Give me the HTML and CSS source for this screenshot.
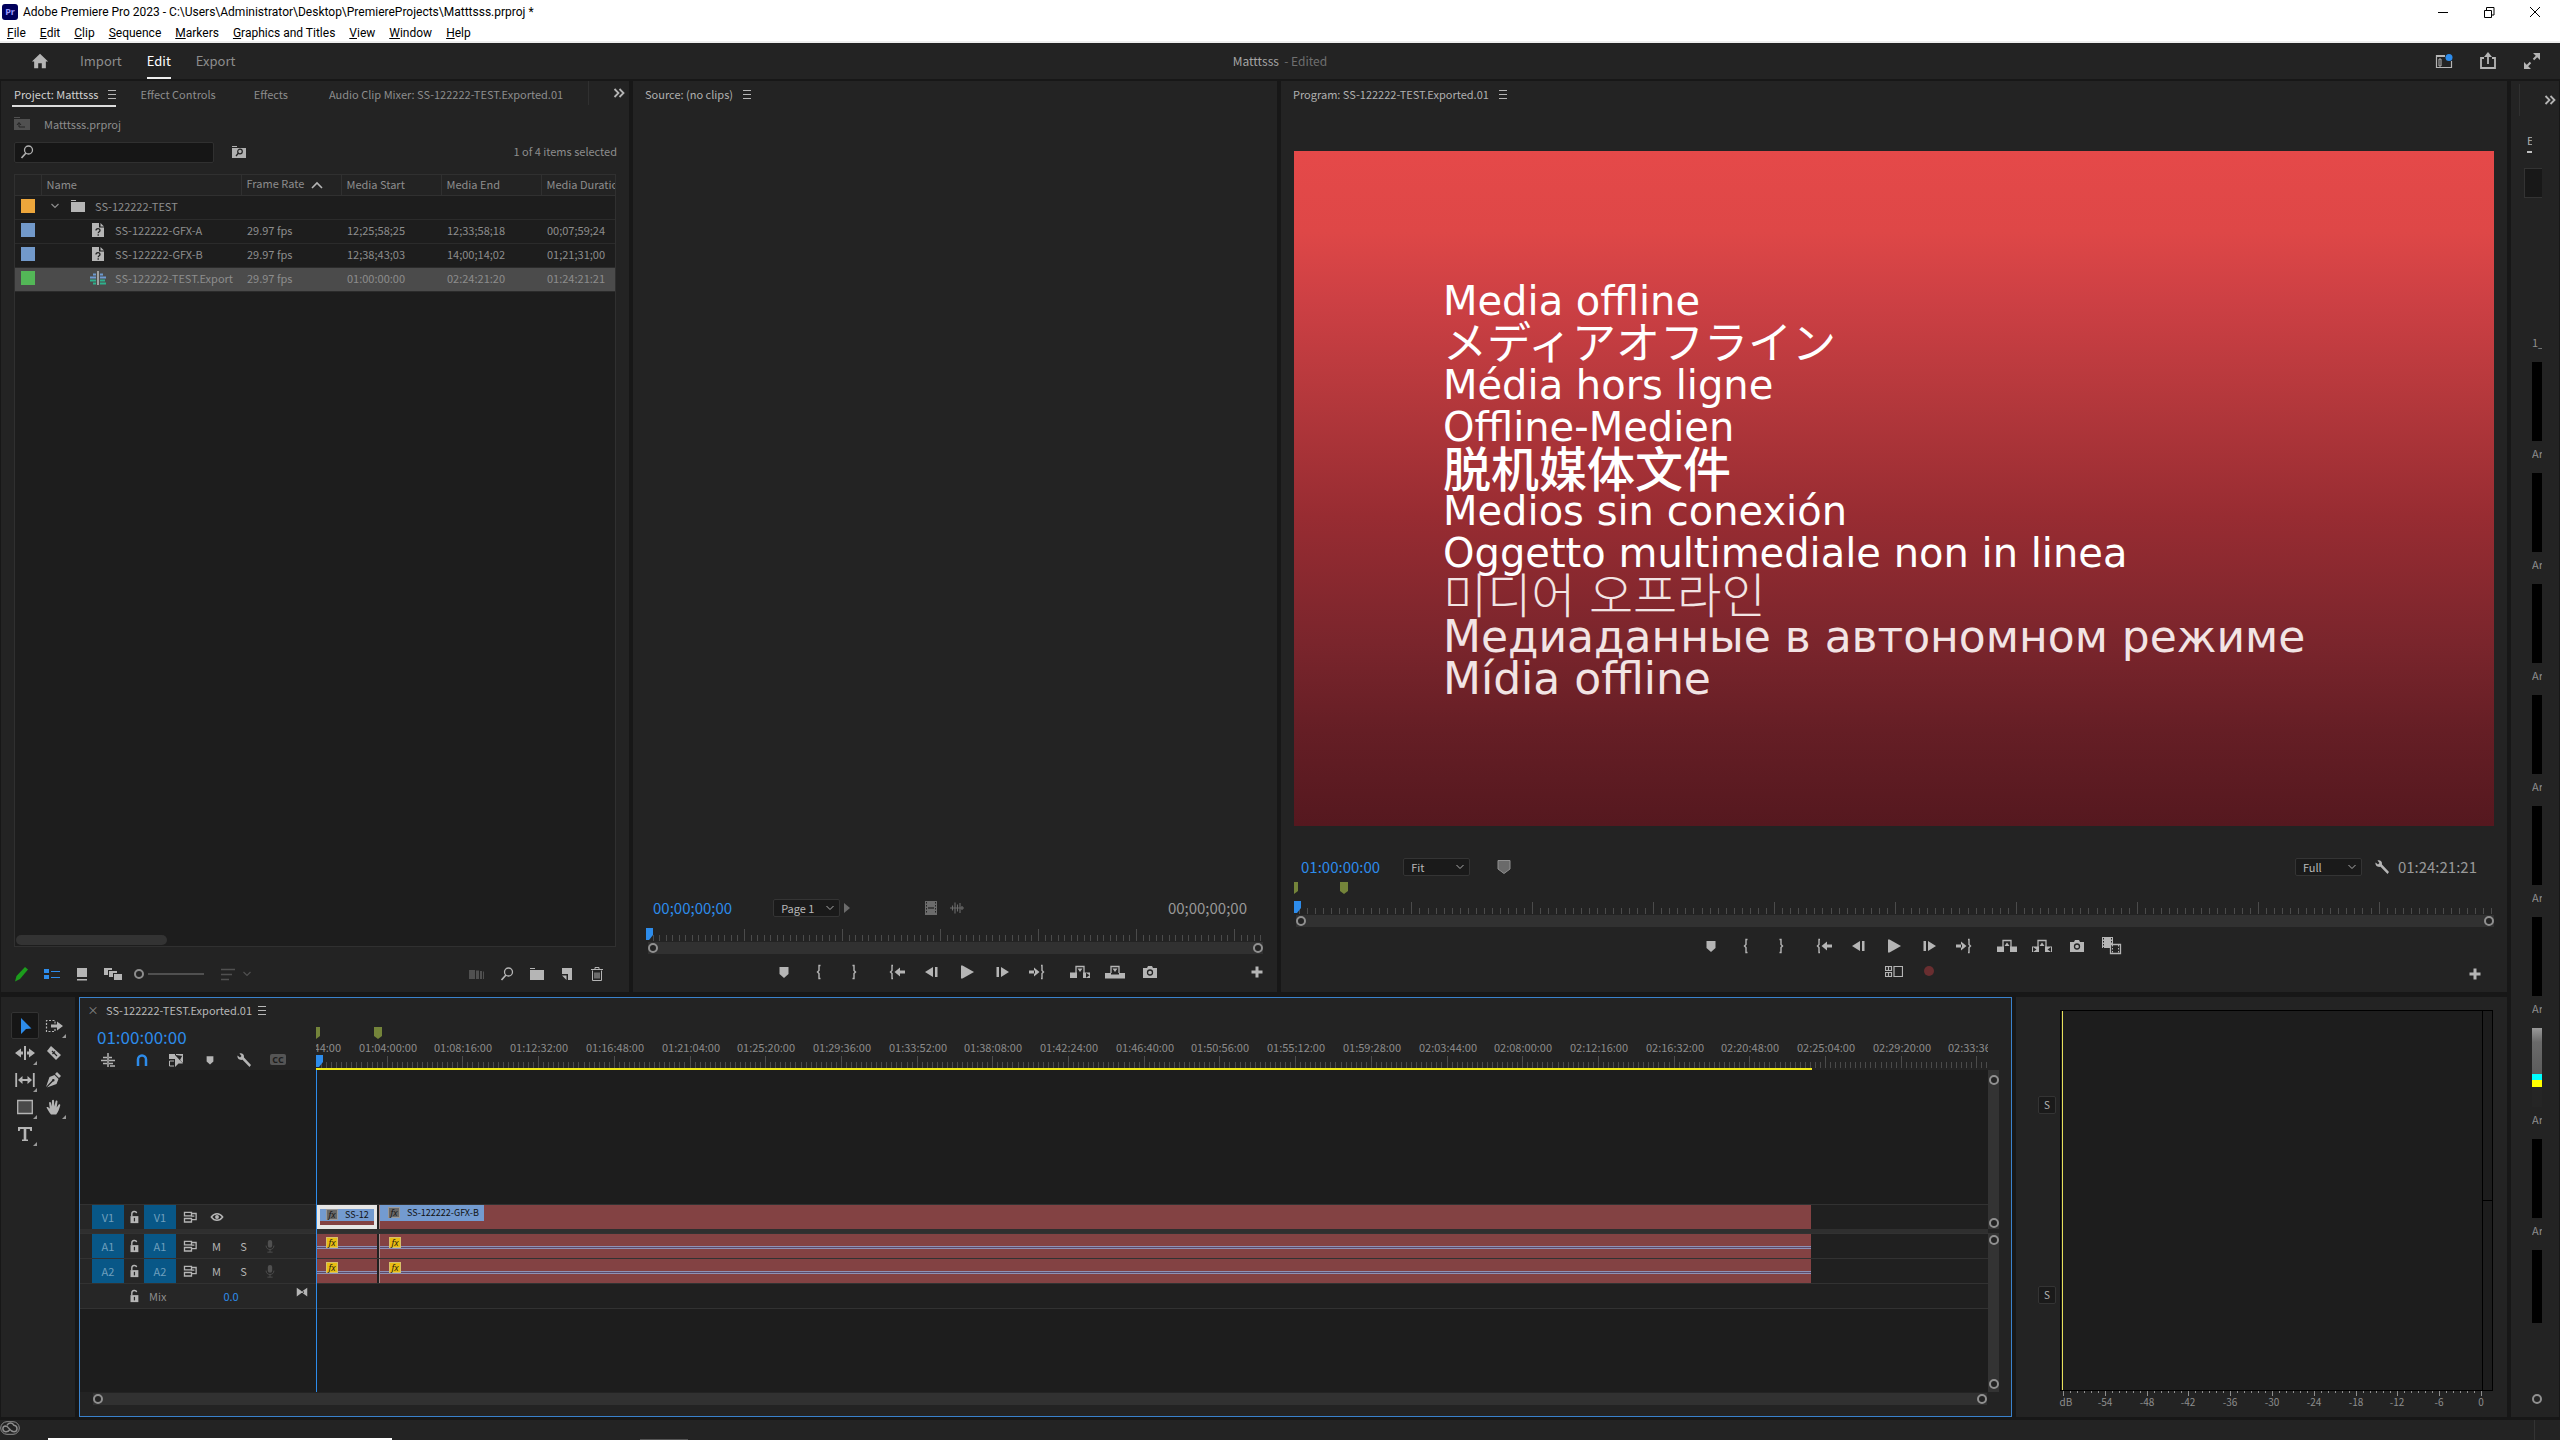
FILE: index.html
```html
<!DOCTYPE html>
<html lang="en">
<head>
<meta charset="utf-8">
<title>Adobe Premiere Pro 2023</title>
<link rel="stylesheet" href="styles.css">
</head>
<body>
<svg class="sprite" aria-hidden="true">
  <symbol id="menu" viewBox="0 0 16 16"><path d="M4 4.500h8M4 8.500h8M4 12.500h8" stroke="currentColor" fill="none"/></symbol>
  <symbol id="more" viewBox="0 0 16 16"><path d="M3.500 4l4 4-4 4M8.500 4l4 4-4 4" stroke="currentColor" stroke-width="1.800" fill="none"/></symbol>
  <symbol id="chev" viewBox="0 0 16 16"><path d="M4.500 6l3.500 3.500L11.500 6" stroke="currentColor" stroke-width="1.200" fill="none"/></symbol>
  <symbol id="sort-up" viewBox="0 0 16 16"><path d="M3 11l5-5 5 5" stroke="currentColor" stroke-width="1.600" fill="none"/></symbol>
  <symbol id="home" viewBox="0 0 20 20"><path d="M10 2L1 10.500h2.500V18h4.500v-5.500h4V18h4.500v-7.500H19z" fill="currentColor"/></symbol>
  <symbol id="workspace" viewBox="0 0 18 16"><path d="M10 2.500H1.500v12h15V8" stroke="currentColor" stroke-width="1.200" fill="none"/><path d="M1 2h9v2H1z" fill="currentColor"/><path d="M4 6v7h2V6z" stroke="currentColor" fill="none"/><circle cx="14" cy="4.500" r="3.500" fill="#2d8ceb"/></symbol>
  <symbol id="share" viewBox="0 0 18 18"><path d="M5 6H2v10h14V6h-3M9 12V3" stroke="currentColor" stroke-width="1.800" fill="none"/><path d="M9 0l4 5H5z" fill="currentColor"/></symbol>
  <symbol id="expand" viewBox="0 0 18 18"><path d="M10.500 7.500L14 4M7.500 10.500L4 14" stroke="currentColor" stroke-width="2" fill="none"/><path d="M10 1h7v7zM1 10v7h7z" fill="currentColor"/></symbol>
  <symbol id="folder-up" viewBox="0 0 16 16"><path d="M0 1h6v1H0zM0 3h16v11H0z" fill="currentColor"/><path d="M5 7v4h6M3 9l2-2.500L7 9" stroke="#232323" fill="none"/></symbol>
  <symbol id="search" viewBox="0 0 16 16"><circle cx="9.500" cy="6" r="4" stroke="currentColor" stroke-width="1.300" fill="none"/><path d="M7 9l-4.500 5" stroke="currentColor" stroke-width="1.700"/></symbol>
  <symbol id="folder-search" viewBox="0 0 16 16"><path d="M1 2h5v1H1zM1 4h14v10H1z" fill="currentColor"/><circle cx="9" cy="7.500" r="2.300" stroke="#232323" stroke-width="1.200" fill="none"/><path d="M7.500 9L5 12" stroke="#232323" stroke-width="1.300"/></symbol>
  <symbol id="folder" viewBox="0 0 16 16"><path d="M1 2h5v1H1zM1 4h14v10H1z" fill="currentColor"/></symbol>
  <symbol id="offline" viewBox="0 0 16 16"><path d="M2 1h7v4.500h5V15H2z" fill="currentColor"/><path d="M10.500 1v3.500H14z" fill="currentColor"/><path d="M6 8.500c0-2.500 4-2.300 4 0 0 1.300-1.800 1.200-1.800 2.700M8.200 12.200v1.500" stroke="#232323" stroke-width="1.300" fill="none"/></symbol>
  <symbol id="sequence" viewBox="0 0 16 16"><path d="M3 4.500h3M0 7.500h6M10 4.500h3M10 7.500h6" stroke="#6e9ad0" stroke-width="1.800"/><path d="M0 10.500h6M3 13.500h3M10 10.500h5M10 13.500h6" stroke="#2fb08c" stroke-width="1.800"/><path d="M8 1v14" stroke="#ddd" stroke-width="1.200"/></symbol>
  <symbol id="pencil" viewBox="0 0 16 16"><path d="M11 1l3 2.500L6 13l-5 2.500L2.500 10z" fill="#1c9c1c"/></symbol>
  <symbol id="list" viewBox="0 0 16 16"><path d="M0 3h5v4H0zM0 9h5v4H0z" fill="currentColor"/><path d="M7 5.500h9M7 11.500h9" stroke="currentColor" stroke-width="1.200"/></symbol>
  <symbol id="iconview" viewBox="0 0 16 16"><path d="M3 2h10v9H3zM3 13h10v1.500H3z" fill="currentColor"/></symbol>
  <symbol id="freeform" viewBox="0 0 18 16"><path d="M0 2h8v2H4v5H0zM5 5h8v2H9v4H5zM10 8h8v6h-8z" fill="currentColor"/></symbol>
  <symbol id="sort" viewBox="0 0 16 16"><path d="M1 3.500h14M1 8.500h11M1 13.500h8" stroke="currentColor" stroke-width="1.500"/></symbol>
  <symbol id="automate" viewBox="0 0 16 16"><path d="M0 4h6v9H0zM7 4.500h3V13H7zM11 5h2v8h-2zM14 5.500h1V13h-1z" fill="currentColor"/></symbol>
  <symbol id="newitem" viewBox="0 0 16 16"><path d="M3 2h10v12H9V8H3z" fill="currentColor"/><path d="M3 9.500h4.500V14z" fill="currentColor"/></symbol>
  <symbol id="trash" viewBox="0 0 16 16"><path d="M3.500 4.500v10h9v-10M2 3.500h12M6 3V1.500h4V3M6 6.500v6M8 6.500v6M10 6.500v6" stroke="currentColor" fill="none"/></symbol>
  <symbol id="marker" viewBox="0 0 16 16"><path d="M3.500 3h9v7L8 14l-4.500-4z" fill="currentColor"/></symbol>
  <symbol id="in" viewBox="0 0 16 16"><path d="M9.500 1.500H8v5L6.500 8 8 9.500v5h1.500" stroke="currentColor" stroke-width="1.400" fill="none"/></symbol>
  <symbol id="out" viewBox="0 0 16 16"><path d="M6.500 1.500H8v5L9.500 8 8 9.500v5H6.500" stroke="currentColor" stroke-width="1.400" fill="none"/></symbol>
  <symbol id="goin" viewBox="0 0 16 16"><path d="M4 1.500H3v5L1.500 8 3 9.500v5h1" stroke="currentColor" stroke-width="1.400" fill="none"/><path d="M5.500 8L11 3.500v9z" fill="currentColor"/><path d="M10 6.500h6v3h-6z" fill="currentColor"/></symbol>
  <symbol id="goout" viewBox="0 0 16 16"><path d="M12 1.500h1v5L14.500 8 13 9.500v5h-1" stroke="currentColor" stroke-width="1.400" fill="none"/><path d="M10.500 8L5 3.500v9zM0 6.500h6v3H0z" fill="currentColor"/></symbol>
  <symbol id="back" viewBox="0 0 16 16"><path d="M1 8l8-5v10zM11 3h2.500v10H11z" fill="currentColor"/></symbol>
  <symbol id="fwd" viewBox="0 0 16 16"><path d="M15 8L7 3v10zM2.500 3H5v10H2.500z" fill="currentColor"/></symbol>
  <symbol id="play" viewBox="0 0 16 16"><path d="M2 1.500h1.500L15 8 3.500 14.500H2z" fill="currentColor"/></symbol>
  <symbol id="insert" viewBox="0 0 20 16"><path d="M6 9V2.500h8V9" stroke="currentColor" stroke-width="1.300" fill="none"/><path d="M0 8.500h7V14H0zM13 8.500h7V14h-7zM7.500 4.500h5L10 8z" fill="currentColor"/><path d="M16 8.800l3.500 2.500-3.500 2.500z" fill="#232323"/></symbol>
  <symbol id="overwrite" viewBox="0 0 20 16"><path d="M6 9V2.500h8V9" stroke="currentColor" stroke-width="1.300" fill="none"/><path d="M7.500 4.500h5L10 8zM0 9h6v1.500h8V9h6v5.500H0z" fill="currentColor"/></symbol>
  <symbol id="lift" viewBox="0 0 20 16"><path d="M6 9V2.500h8V9" stroke="currentColor" stroke-width="1.300" fill="none"/><path d="M7.500 8L10 4.500 12.500 8zM0 8.500h7V14H0zM13 8.500h7V14h-7z" fill="currentColor"/></symbol>
  <symbol id="extract" viewBox="0 0 20 16"><path d="M6 9V2.500h8V9" stroke="currentColor" stroke-width="1.300" fill="none"/><path d="M7.500 8L10 4.500 12.500 8zM0 8.500h7V14H0zM13 8.500h7V14h-7z" fill="currentColor"/><path d="M1 9l3.500 2.500L1 14zM19 9l-3.500 2.500L19 14z" fill="#232323"/></symbol>
  <symbol id="camera" viewBox="0 0 16 16"><path d="M1 4h4l1-2h4l1 2h4v10H1z" fill="currentColor"/><circle cx="8" cy="8.500" r="2.500" stroke="#232323" stroke-width="1.300" fill="none"/></symbol>
  <symbol id="compare" viewBox="0 0 20 18"><path d="M0 0h11v11H0z" fill="currentColor"/><path d="M1.500 1v10M9.500 1v7" stroke="#232323" stroke-dasharray="1.500 1.500"/><path d="M8.500 7.500h10v9h-10z" fill="#232323" stroke="currentColor" stroke-width="1.300"/><path d="M10.500 8v9M16.500 8v9" stroke="currentColor" stroke-dasharray="1.500 1.500"/></symbol>
  <symbol id="multicam" viewBox="0 0 18 16"><path d="M.5 3.500h6v4h-6zM.5 9.500h6v4h-6zM3.500 3.500v4M3.500 9.500v4M9 3.500h8.500v10H9z" stroke="currentColor" stroke-width="1.200" fill="none"/></symbol>
  <symbol id="plus" viewBox="0 0 16 16"><path d="M6.500 2.500h3v4h4v3h-4v4h-3v-4h-4v-3h4z" fill="currentColor"/></symbol>
  <symbol id="film" viewBox="0 0 16 16"><path d="M2 1h12v14H2z" fill="currentColor"/><path d="M3.500 2v12M12.500 2v12" stroke="#232323" stroke-dasharray="1.500 1.500"/><path d="M5 8h6" stroke="#232323" stroke-width="1.300"/></symbol>
  <symbol id="wave" viewBox="0 0 16 16"><path d="M1 8h14M3.500 5.500v5M6 2.500v11M8.500 4.500v7M11 3v10M13 6v4" stroke="currentColor" stroke-width="1.100"/></symbol>
  <symbol id="tri" viewBox="0 0 16 16"><path d="M4 3l6 5-6 5z" fill="currentColor"/></symbol>
  <symbol id="shield" viewBox="0 0 16 16"><path d="M2 1.500h12v8.500l-6 4.500L2 10z" fill="#6a6a6a" stroke="currentColor"/></symbol>
  <symbol id="wrench" viewBox="0 0 16 16"><path d="M3.500 1.500c2-.8 5 .5 4.500 4l7 7.500-1.500 2L6.500 7.800C3.500 8.500 1 6.500 1.500 3.500L4 5.500 5.500 4z" fill="currentColor"/></symbol>
  <symbol id="nest" viewBox="0 0 16 16"><path d="M8 1v14M1 8.500h6M3 5.500h4M3 11.500h4M9 5.500h3M9 8.500h6M9 11.500h4M10 14h5" stroke="currentColor" stroke-width="1.500"/></symbol>
  <symbol id="magnet" viewBox="0 0 16 16"><path d="M4 14V7.500a4 4 0 0 1 8 0V14" stroke="currentColor" stroke-width="2.500" fill="none"/></symbol>
  <symbol id="linked" viewBox="0 0 16 16"><path d="M1 2h6v5H1zM8 2h7v2L8 3zM15 2v9l-3-3z" fill="currentColor"/><path d="M6 9H1.500v5H6" stroke="currentColor" fill="none"/><path d="M7 3l8 8.500h-4.500L7 15z" fill="currentColor"/></symbol>
  <symbol id="arrow" viewBox="0 0 16 16"><path d="M4 0l10.500 10.500L9 11l-5 5z" fill="currentColor"/></symbol>
  <symbol id="track" viewBox="0 0 18 16"><path d="M10 5.500v-3H1.500v11H10v-3" stroke="currentColor" stroke-width="1.200" stroke-dasharray="2 1.500" fill="none"/><path d="M6 6.500h6v-3L18 8l-6 4.500v-3H6z" fill="currentColor"/></symbol>
  <symbol id="ripple" viewBox="0 0 20 16"><path d="M9 1h2v14H9z" fill="currentColor"/><path d="M0 8l6-4.500v3h2v3H6v3zM20 8l-6-4.500v3h-2v3h2v3z" fill="currentColor"/></symbol>
  <symbol id="razor" viewBox="0 0 16 16"><path d="M5 1l10 9-5 5L1 6z" fill="currentColor"/><path d="M6 6l5 5M9 6.500L6.500 9" stroke="#232323" stroke-width="1.200"/></symbol>
  <symbol id="slip" viewBox="0 0 20 16"><path d="M1.200 1v14M18.800 1v14M5 8h10" stroke="currentColor" stroke-width="1.800"/><path d="M3 8l4.500-4v8zM17 8l-4.500-4v8z" fill="currentColor"/></symbol>
  <symbol id="pen" viewBox="0 0 16 16"><path d="M11 0l4 4-2 2-4-4zM8.500 3l4 4-2 5L1 15.500 7 9.500a1.300 1.300 0 1 0-1-1L0 15 3.500 5z" fill="currentColor"/></symbol>
  <symbol id="rect" viewBox="0 0 16 16"><path d="M.7 1.500h14.600v13H.7z" fill="#4a4a4a" stroke="currentColor" stroke-width="1.300"/></symbol>
  <symbol id="hand" viewBox="0 0 16 16"><path d="M5 15.500C3 13 1.500 10.500.5 8.500c.8-1 2-.3 3.300 1.300L3 3.500c.8-1 1.800-.7 2 .5l.8 3.500.2-6c.7-1 1.700-1 2 0l.3 6 1.400-5.500c.8-.8 1.700-.5 1.800.5l-.8 6 2-3c.8-.7 1.800 0 1.500 1-1 3.500-2 6.500-4 9z" fill="currentColor"/></symbol>
  <symbol id="type" viewBox="0 0 16 16"><path d="M1 1h14v4h-1.700l-.6-2H9.300v10.500H11V15H5v-1.500h1.700V3H3.300l-.6 2H1z" fill="currentColor"/></symbol>
  <symbol id="lock" viewBox="0 0 16 16"><path d="M4 7h9v8H4z" fill="currentColor"/><path d="M5.500 7V4.500c0-3.500 5-3.500 5.500-1" stroke="currentColor" stroke-width="1.600" fill="none"/><path d="M8.500 9v4" stroke="#272727" stroke-width="1.400"/></symbol>
  <symbol id="sync" viewBox="0 0 16 16"><path d="M1.700 2.700h8v4h-8zM1.700 9.700h8v4h-8zM10 4h5v7h-5M9 7h4" stroke="currentColor" stroke-width="1.500" fill="none"/></symbol>
  <symbol id="eye" viewBox="0 0 16 16"><path d="M1.500 8c3.500-5 9.500-5 13 0-3.500 5-9.500 5-13 0z" stroke="currentColor" stroke-width="1.600" fill="none"/><circle cx="8" cy="8" r="2.200" fill="currentColor"/></symbol>
  <symbol id="mic" viewBox="0 0 16 16"><rect x="5.500" y="1" width="5" height="9" rx="2.500" fill="currentColor"/><path d="M3.500 7.500c0 6 9 6 9 0M8 12v3M5 15h6" stroke="currentColor" fill="none"/></symbol>
  <symbol id="bowtie" viewBox="0 0 16 16"><path d="M2 3l5 3.500v3L2 13zM14 3L9 6.500v3l5 3.500zM6 7h4v2H6z" fill="currentColor"/></symbol>
  <symbol id="cloud" viewBox="0 0 20 16"><rect x=".7" y="1.700" width="18.600" height="12.600" rx="6.300" stroke="currentColor" fill="none"/><path d="M10 9.500c-1.500 2-3 2.500-4.500 2.300-3.500-.5-3.500-5.500 0-5.800 3.500 0 4 5.800 8.500 5.800 4-.3 4-6 0-6.500-1.500-3-5.500-3-7 0" stroke="currentColor" stroke-width="1.500" fill="none"/></symbol>
  <symbol id="playhead" viewBox="0 0 7 12"><path d="M0 0h7v7l-4 5H0z" fill="#2d8ceb"/></symbol>
  <symbol id="flag" viewBox="0 0 8 12"><path d="M0 0h8v9l-4 3-4-3z" fill="#74843a"/></symbol>
  <symbol id="flag-half" viewBox="0 0 4 12"><path d="M0 0h4v9l-4 3z" fill="#74843a"/></symbol>
</svg>

<header class="titlebar">
  <span class="app-badge">Pr</span>
  <span class="doc-title">Adobe Premiere Pro 2023 - C:\Users\Administrator\Desktop\PremiereProjects\Matttsss.prproj *</span>
  <div class="window-buttons">
    <button aria-label="Minimize"><svg width="10" height="10"><path d="M0 5.500h10" stroke="#000"/></svg></button>
    <button aria-label="Restore"><svg width="11" height="11"><path d="M.5 3.500h7v7h-7zM2.500 3V.5h7.500v7.500H8" stroke="#000" fill="none"/></svg></button>
    <button aria-label="Close"><svg width="10" height="10"><path d="M0 0l10 10M10 0L0 10" stroke="#000"/></svg></button>
  </div>
</header>
<nav class="menubar">
  <button><u>F</u>ile</button><button><u>E</u>dit</button><button><u>C</u>lip</button><button><u>S</u>equence</button><button><u>M</u>arkers</button><button><u>G</u>raphics and Titles</button><button><u>V</u>iew</button><button><u>W</u>indow</button><button><u>H</u>elp</button>
</nav>
<div class="modebar">
  <div class="modes">
    <button class="home" aria-label="Home"><svg width="20" height="18"><use href="#home"/></svg></button>
    <button>Import</button><button class="active">Edit</button><button>Export</button>
  </div>
  <div class="doc-state">Matttsss&nbsp; <span>- Edited</span></div>
  <div class="mode-actions">
    <button aria-label="Workspaces"><svg width="18" height="16"><use href="#workspace"/></svg></button>
    <button aria-label="Quick export"><svg width="18" height="18"><use href="#share"/></svg></button>
    <button aria-label="Full screen"><svg width="18" height="18"><use href="#expand"/></svg></button>
  </div>
</div>

<main class="workspace">
  <div class="rows">
    <div class="top-row">
      <section class="panel project">
        <div class="tabs">
          <button class="tab active">Project: Matttsss<svg class="i"><use href="#menu"/></svg></button>
          <button class="tab t2">Effect Controls</button>
          <button class="tab t3">Effects</button>
          <button class="tab t4">Audio Clip Mixer: SS-122222-TEST.Exported.01</button>
          <button class="overflow" aria-label="More panels"><svg class="i"><use href="#more"/></svg></button>
        </div>
        <div class="crumb"><svg class="i"><use href="#folder-up"/></svg>Matttsss.prproj</div>
        <div class="search-row">
          <label class="search"><svg class="i"><use href="#search"/></svg><input type="text" aria-label="Search project"></label>
          <button aria-label="New search bin"><svg class="i"><use href="#folder-search"/></svg></button>
          <span class="count">1 of 4 items selected</span>
        </div>
        <div class="bin">
          <table>
            <colgroup><col class="c-label"><col class="c-name"><col class="c-data"><col class="c-data"><col class="c-data"><col></colgroup>
            <thead><tr><th></th><th>Name</th><th>Frame Rate<svg class="i up"><use href="#sort-up"/></svg></th><th>Media Start</th><th>Media End</th><th>Media Duration</th></tr></thead>
            <tbody>
              <tr><td><i class="chip orange"></i></td><td colspan="5"><div class="cell bin-name"><svg class="i dim"><use href="#chev"/></svg><svg class="i"><use href="#folder"/></svg>SS-122222-TEST</div></td></tr>
              <tr><td><i class="chip blue"></i></td><td><div class="cell item"><svg class="i"><use href="#offline"/></svg>SS-122222-GFX-A</div></td><td>29.97 fps</td><td>12;25;58;25</td><td>12;33;58;18</td><td>00;07;59;24</td></tr>
              <tr><td><i class="chip blue"></i></td><td><div class="cell item"><svg class="i"><use href="#offline"/></svg>SS-122222-GFX-B</div></td><td>29.97 fps</td><td>12;38;43;03</td><td>14;00;14;02</td><td>01;21;31;00</td></tr>
              <tr class="selected"><td><i class="chip green"></i></td><td><div class="cell item"><svg class="i"><use href="#sequence"/></svg>SS-122222-TEST.Export</div></td><td>29.97 fps</td><td>01:00:00:00</td><td>02:24:21:20</td><td>01:24:21:21</td></tr>
            </tbody>
          </table>
          <div class="hscroll"></div>
        </div>
        <div class="bin-tools">
          <button aria-label="Writable"><svg class="i"><use href="#pencil"/></svg></button>
          <button class="on" aria-label="List view"><svg class="i"><use href="#list"/></svg></button>
          <button aria-label="Icon view"><svg class="i"><use href="#iconview"/></svg></button>
          <button aria-label="Freeform view"><svg width="18" height="16"><use href="#freeform"/></svg></button>
          <input class="zoom" type="range" min="0" max="100" value="0" aria-label="Thumbnail size">
          <button class="off" aria-label="Sort"><svg class="i"><use href="#sort"/></svg><svg class="i"><use href="#chev"/></svg></button>
          <span class="grow"></span>
          <button class="off" aria-label="Automate to sequence"><svg class="i"><use href="#automate"/></svg></button>
          <button aria-label="Find"><svg class="i"><use href="#search"/></svg></button>
          <button aria-label="New bin"><svg class="i"><use href="#folder"/></svg></button>
          <button aria-label="New item"><svg class="i"><use href="#newitem"/></svg></button>
          <button aria-label="Delete"><svg class="i"><use href="#trash"/></svg></button>
        </div>
      </section>

      <section class="panel monitor source">
        <div class="tabs"><button class="tab plain">Source: (no clips)<svg class="i"><use href="#menu"/></svg></button></div>
        <div class="stage"></div>
        <div class="readout">
          <span class="tc blue-text">00;00;00;00</span>
          <select aria-label="Page"><option>Page 1</option></select><svg class="i faint"><use href="#tri"/></svg>
          <span class="drag-icons"><svg class="i"><use href="#film"/></svg><svg class="i"><use href="#wave"/></svg></span>
          <span class="tc end">00;00;00;00</span>
        </div>
        <div class="flags"></div>
        <div class="ruler" data-scale="618" data-start="0" data-step="98"><svg class="head" width="7" height="12"><use href="#playhead"/></svg></div>
        <div class="range"><i></i><i></i></div>
        <div class="transport">
          <div class="keys">
            <button aria-label="Add marker"><svg class="i"><use href="#marker"/></svg></button><button aria-label="Mark in"><svg class="i"><use href="#in"/></svg></button><button aria-label="Mark out"><svg class="i"><use href="#out"/></svg></button>
            <button class="gap" aria-label="Go to in"><svg class="i"><use href="#goin"/></svg></button><button aria-label="Step back"><svg class="i"><use href="#back"/></svg></button><button aria-label="Play"><svg class="i"><use href="#play"/></svg></button><button aria-label="Step forward"><svg class="i"><use href="#fwd"/></svg></button><button aria-label="Go to out"><svg class="i"><use href="#goout"/></svg></button>
            <button class="gap" aria-label="Insert"><svg width="20" height="16"><use href="#insert"/></svg></button><button aria-label="Overwrite"><svg width="20" height="16"><use href="#overwrite"/></svg></button><button aria-label="Export frame"><svg class="i"><use href="#camera"/></svg></button>
          </div>
          <button class="add" aria-label="Button editor"><svg class="i"><use href="#plus"/></svg></button>
        </div>
      </section>

      <section class="panel monitor program">
        <div class="tabs"><button class="tab plain">Program: SS-122222-TEST.Exported.01<svg class="i"><use href="#menu"/></svg></button></div>
        <div class="video">
          <p>Media offline</p><p class="cjk" lang="ja">メディアオフライン</p><p>Média hors ligne</p><p>Offline-Medien</p><p class="cjk zh" lang="zh">脱机媒体文件</p><p>Medios sin conexión</p><p>Oggetto multimediale non in linea</p><p class="cjk ko" lang="ko">미디어 오프라인</p><p class="ru" lang="ru">Медиаданные в автономном режиме</p><p class="ru">Mídia offline</p>
        </div>
        <div class="readout">
          <span class="tc blue-text">01:00:00:00</span>
          <select aria-label="Zoom level"><option>Fit</option></select>
          <svg class="i shield"><use href="#shield"/></svg>
          <span class="grow"></span>
          <select aria-label="Playback resolution"><option>Full</option></select>
          <button class="settings" aria-label="Settings"><svg class="i"><use href="#wrench"/></svg></button>
          <span class="tc">01:24:21:21</span>
        </div>
        <div class="flags"><svg width="4" height="12"><use href="#flag-half"/></svg><svg class="second" width="8" height="12"><use href="#flag"/></svg></div>
        <div class="ruler" data-scale="1199" data-start="-3.500" data-step="120.800"><svg class="head" width="7" height="12"><use href="#playhead"/></svg></div>
        <div class="range"><i></i><i></i></div>
        <div class="transport">
          <div class="keys">
            <button aria-label="Add marker"><svg class="i"><use href="#marker"/></svg></button><button aria-label="Mark in"><svg class="i"><use href="#in"/></svg></button><button aria-label="Mark out"><svg class="i"><use href="#out"/></svg></button>
            <button class="gap" aria-label="Go to in"><svg class="i"><use href="#goin"/></svg></button><button aria-label="Step back"><svg class="i"><use href="#back"/></svg></button><button aria-label="Play"><svg class="i"><use href="#play"/></svg></button><button aria-label="Step forward"><svg class="i"><use href="#fwd"/></svg></button><button aria-label="Go to out"><svg class="i"><use href="#goout"/></svg></button>
            <button class="gap" aria-label="Lift"><svg width="20" height="16"><use href="#lift"/></svg></button><button aria-label="Extract"><svg width="20" height="16"><use href="#extract"/></svg></button><button aria-label="Export frame"><svg class="i"><use href="#camera"/></svg></button><button aria-label="Comparison view"><svg width="20" height="18"><use href="#compare"/></svg></button>
          </div>
        </div>
        <div class="transport">
          <div class="keys"><button aria-label="Multi-camera"><svg width="18" height="16"><use href="#multicam"/></svg></button><button aria-label="Record"><i class="rec"></i></button></div>
          <button class="add" aria-label="Button editor"><svg class="i"><use href="#plus"/></svg></button>
        </div>
      </section>
    </div>

    <div class="bottom-row">
      <section class="panel tools">
        <button class="active" aria-label="Selection"><svg class="i"><use href="#arrow"/></svg></button>
        <button class="sub" aria-label="Track select"><svg width="18" height="16"><use href="#track"/></svg></button>
        <button class="sub" aria-label="Ripple edit"><svg width="20" height="16"><use href="#ripple"/></svg></button>
        <button aria-label="Razor"><svg class="i"><use href="#razor"/></svg></button>
        <button class="sub" aria-label="Slip"><svg width="20" height="16"><use href="#slip"/></svg></button>
        <button aria-label="Pen"><svg class="i"><use href="#pen"/></svg></button>
        <button class="sub" aria-label="Rectangle"><svg class="i"><use href="#rect"/></svg></button>
        <button class="sub" aria-label="Hand"><svg class="i"><use href="#hand"/></svg></button>
        <button class="sub" aria-label="Type"><svg class="i"><use href="#type"/></svg></button>
      </section>

      <section class="panel timeline">
        <div class="tl-top">
          <div class="tl-head">
            <div class="tl-tab"><button class="close" aria-label="Close sequence">×</button>SS-122222-TEST.Exported.01<svg class="i"><use href="#menu"/></svg></div>
            <div class="tl-tc blue-text">01:00:00:00</div>
            <div class="tl-tools">
              <button aria-label="Insert as nest"><svg class="i"><use href="#nest"/></svg></button><button class="on" aria-label="Snap"><svg class="i"><use href="#magnet"/></svg></button><button aria-label="Linked selection"><svg class="i"><use href="#linked"/></svg></button><button aria-label="Add marker"><svg width="12" height="12"><use href="#marker"/></svg></button><button aria-label="Timeline settings"><svg class="i"><use href="#wrench"/></svg></button><button aria-label="Captions"><span class="cc">CC</span></button>
            </div>
          </div>
          <div class="tl-ruler">
            <div class="flags"><svg width="4" height="12"><use href="#flag-half"/></svg><svg class="second" width="8" height="12"><use href="#flag"/></svg></div>
            <div class="labels" id="labels"></div>
            <div class="ruler" data-scale="1672" data-start="-5" data-step="75.700"><svg class="head" width="7" height="12"><use href="#playhead"/></svg></div>
            <div class="workarea"></div>
          </div>
        </div>
        <div class="tl-body">
          <div class="tracks">
            <div class="space video-space"></div>
            <div class="trk">
              <div class="th"><button class="patch">V1</button><svg class="i"><use href="#lock"/></svg><button class="patch">V1</button><svg class="i"><use href="#sync"/></svg><svg class="i eye"><use href="#eye"/></svg></div>
              <div class="lane">
                <div class="clip a sel"><span class="name"><em>fx</em>SS-12</span></div>
                <div class="clip b"><span class="name"><em>fx</em>SS-122222-GFX-B</span></div>
              </div>
            </div>
            <div class="split"></div>
            <div class="trk">
              <div class="th"><button class="patch">A1</button><svg class="i"><use href="#lock"/></svg><button class="patch">A1</button><svg class="i"><use href="#sync"/></svg><button>M</button><button>S</button><svg class="i mic"><use href="#mic"/></svg></div>
              <div class="lane"><div class="clip a audio"><em>fx</em></div><div class="clip b audio"><em>fx</em></div></div>
            </div>
            <div class="trk">
              <div class="th"><button class="patch">A2</button><svg class="i"><use href="#lock"/></svg><button class="patch">A2</button><svg class="i"><use href="#sync"/></svg><button>M</button><button>S</button><svg class="i mic"><use href="#mic"/></svg></div>
              <div class="lane"><div class="clip a audio"><em>fx</em></div><div class="clip b audio"><em>fx</em></div></div>
            </div>
            <div class="trk last">
              <div class="th mix"><svg class="i"><use href="#lock"/></svg><span>Mix</span><span class="blue-text">0.0</span><svg class="i"><use href="#bowtie"/></svg></div>
              <div class="lane"></div>
            </div>
            <div class="space audio-space"></div>
            <i class="playline"></i>
          </div>
          <div class="vscroll"><div class="vbar v"><i></i><i></i></div><div class="vbar a"><i></i><i></i></div></div>
        </div>
        <div class="tl-scroll"><i></i><i></i></div>
      </section>

      <section class="panel meters">
        <div class="solo"><button>S</button><button>S</button></div>
        <div class="meter-col">
          <div class="meter"><div class="level"></div><div class="peak"><b></b><b></b></div></div>
          <div class="db-ticks" id="dbticks"></div>
          <div class="db" id="db"><span>dB</span></div>
        </div>
      </section>
    </div>
  </div>

  <aside class="panel strip">
    <div class="strip-top"><svg class="i"><use href="#more"/></svg></div>
    <div class="strip-tab">E</div>
    <div class="strip-box"></div>
    <ul>
      <li>1_</li><li class="thumb"></li><li>Ar</li><li class="thumb"></li><li>Ar</li><li class="thumb"></li><li>Ar</li><li class="thumb"></li><li>Ar</li><li class="thumb"></li><li>Ar</li><li class="thumb"></li><li>Ar</li><li class="thumb colour"></li><li>Ar</li><li class="thumb"></li><li>Ar</li><li class="thumb short"></li>
    </ul>
    <i class="knob"></i>
  </aside>
</main>
<footer class="status"><svg width="20" height="16"><use href="#cloud"/></svg><span class="edge"></span></footer>
<script src="script.js"></script>
</body>
</html>
```
FILE: styles.css
```css
* { box-sizing: border-box; }
html, body { height: 100%; }
body {
  margin: 0;
  min-height: 100vh;
  display: flex;
  flex-direction: column;
  background: #171717;
  color: #8d8d8d;
  font: 11px/16px "Noto Sans CJK SC", "Noto Sans", sans-serif;
  overflow: hidden;
}
button, input, select { font: inherit; color: inherit; background: none; border: 0; padding: 0; margin: 0; border-radius: 0; }
button { display: inline-flex; align-items: center; justify-content: center; flex: none; }
svg { flex: none; display: block; }
p, ul { margin: 0; padding: 0; list-style: none; }
.sprite { position: absolute; width: 0; height: 0; }
.i { width: 16px; height: 16px; }
.grow { flex: 1; }
.blue-text { color: #2d8ceb; }

/* window chrome */
.titlebar { height: 24px; flex: none; background: #fff; color: #000; display: flex; align-items: center; font: 12px/16px Roboto, sans-serif; }
.app-badge { width: 16px; height: 16px; margin: 0 5px 0 2px; background: #00005b; color: #9999ff; border-radius: 3px; font: bold 9px/15px "Open Sans", sans-serif; text-align: center; }
.doc-title { flex: 1; }
.window-buttons { display: flex; padding-right: 2px; }
.window-buttons button { width: 46px; height: 20px; }
.menubar { height: 19px; flex: none; background: #fff; border-bottom: 2px solid #eee; color: #000; display: flex; gap: 14px; padding: 1px 0 0 7px; font: 12px/16px Roboto, sans-serif; }
.modebar { height: 36px; flex: none; background: #232323; display: grid; grid-template-columns: 1fr auto 1fr; align-items: stretch; color: #8d8d8d; font-size: 13px; margin-bottom: 2px; }
.modes { display: flex; gap: 25px; padding-left: 30px; }
.modes button { border-bottom: 2px solid transparent; padding-top: 1px; }
.modes .home { color: #b5b5b5; margin-right: 5px; }
.modes .active { color: #fff; border-color: #eee; }
.doc-state { align-self: center; color: #a5a5a5; font-size: 12px; }
.doc-state span { color: #6f6f6f; }
.mode-actions { display: flex; justify-content: flex-end; gap: 26px; padding-right: 19px; color: #b5b5b5; }

/* panel grid */
.workspace { flex: 1; min-height: 0; display: grid; grid-template-columns: minmax(0, 1fr) 48px; gap: 4px; padding: 0 1px; }
.rows { display: grid; grid-template-rows: minmax(0, 911fr) minmax(0, 420fr); gap: 5px; min-width: 0; min-height: 0; }
.top-row { display: grid; grid-template-columns: minmax(0, 628fr) minmax(0, 644fr) minmax(0, 1226fr); gap: 4px; min-height: 0; }
.bottom-row { display: grid; grid-template-columns: 74px minmax(0, 1fr) 491px; gap: 4px; min-height: 0; }
.panel { background: #232323; min-width: 0; min-height: 0; display: flex; flex-direction: column; }
.tabs { height: 29px; flex: none; display: flex; align-items: flex-start; white-space: nowrap; }
.tab { height: 26px; padding-top: 2px; border-bottom: 2px solid transparent; }
.tab .i { margin-left: 6px; color: #b5b5b5; }
.tab.active { color: #d0d0d0; border-color: #ddd; padding-left: 2px; margin-left: 11px; }
.tab.active .i { margin-right: -4px; }
.tab.plain { color: #b0b0b0; margin-left: 12px; }

/* project */
.t2 { margin-left: 24px; }
.t3 { margin-left: 38px; }
.t4 { margin-left: 41px; }
.overflow { margin-left: auto; width: 41px; height: 24px; border-left: 1px solid #303030; color: #b5b5b5; padding-left: 20px; }
.crumb { display: flex; align-items: center; gap: 14px; padding: 6px 13px 10px; height: 32px; flex: none; }
.crumb .i { color: #505050; }
.search-row { display: flex; align-items: center; padding: 0 12px 0 13px; height: 20px; flex: none; color: #b0b0b0; margin-bottom: 12px; }
.search { width: 200px; height: 21px; background: #161616; border: 1px solid #303030; border-radius: 2px; display: flex; align-items: center; padding-left: 4px; margin-right: 17px; }
.search input { width: 160px; outline: 0; }
.count { margin-left: auto; color: #8d8d8d; padding-bottom: 2px; }
.bin { flex: 1; margin: 0 13px; background: #1d1d1d; border: 1px solid #303030; display: flex; flex-direction: column; justify-content: space-between; overflow: hidden; min-height: 0; }
table { table-layout: fixed; width: 100%; border-collapse: collapse; }
.c-label { width: 26px; }
.c-name { width: 200px; }
.c-data { width: 100px; }
th { height: 19px; padding: 0 0 2px 5px; font-weight: normal; text-align: left; background: #232323; border-right: 1px solid #303030; border-bottom: 1px solid #303030; white-space: nowrap; overflow: hidden; }
th:last-child { border-right: 0; }
td { height: 24px; padding: 0 0 4px 6px; border-bottom: 1px solid #2b2b2b; white-space: nowrap; overflow: hidden; }
.up { display: inline-block; vertical-align: middle; margin-left: 5px; color: #b5b5b5; }
.chip { display: block; width: 14px; height: 14px; }
.orange { background: #eda63b; }
.blue { background: #7299ca; }
.green { background: #53b757; }
.cell { display: flex; align-items: center; gap: 9px; color: #8d8d8d; }
.cell .i { color: #b5b5b5; }
.cell .dim { color: #8d8d8d; margin-right: -2px; }
.item { padding-left: 43px; }
.bin-name { padding-left: 0; }
.selected td { background: #4b4b4b; }
.hscroll { width: 151px; height: 10px; margin: 1px; border-radius: 5px; background: #333; }
.bin-tools { height: 45px; flex: none; display: flex; align-items: center; gap: 14px; padding: 8px 24px 0 13px; color: #b5b5b5; }
.bin-tools .on { color: #2d8ceb; }
.bin-tools .off { color: #505050; gap: 3px; }
.zoom { appearance: none; width: 70px; height: 10px; margin: 0 2px 0 -2px; background: linear-gradient(#505050, #505050) right 4px / 56px 2px no-repeat; }
.zoom::-webkit-slider-thumb { appearance: none; width: 10px; height: 10px; border: 2px solid #8d8d8d; border-radius: 50%; }

/* monitors */
.stage { flex: 1; }
.readout { height: 24px; flex: none; display: flex; align-items: center; color: #999; }
.tc { font-size: 15px; line-height: 20px; }
select { appearance: none; width: 67px; height: 18px; margin-left: 23px; padding-left: 7px; border: 1px solid #343434; border-radius: 2px; color: #b8b8b8; line-height: 15px;
  background: #1a1a1a url("data:image/svg+xml,%3Csvg xmlns='http://www.w3.org/2000/svg' width='8' height='8'%3E%3Cpath d='M.5 2l3.500 3.500L7.500 2' stroke='%23aaa' fill='none'/%3E%3C/svg%3E") right 5px center / 8px 8px no-repeat; }
.flags { height: 12px; flex: none; display: flex; margin-top: 3px; }
.ruler { position: relative; height: 13px; flex: none; color: #4b4b4b; overflow: hidden; }
.ruler .ticks { width: 100%; height: 13px; }
.head { position: absolute; left: 0; top: 0; }
.range, .tl-scroll { height: 12px; flex: none; background: #313131; display: flex; align-items: center; justify-content: space-between; }
.range i, .tl-scroll i, .vbar i, .knob { width: 10px; height: 10px; border: 2px solid #909090; border-radius: 50%; background: #232323; display: block; flex: none; }
.transport { height: 25px; flex: none; display: grid; grid-template-columns: 1fr auto 1fr; align-items: center; color: #b5b5b5; }
.keys { grid-column: 2; display: flex; }
.keys button { width: 35px; height: 24px; }
.keys .gap { margin-left: 8px; }
.add { justify-self: end; }
.faint, .drag-icons { color: #6b6b6b; }
.source .readout { padding: 0 30px 0 20px; margin-bottom: 5px; }
.source select { margin-left: 41px; }
.drag-icons { display: flex; gap: 10px; margin-left: 67px; }
.end { margin-left: auto; }
.source .flags { height: 0; }
.source .ruler { margin: 0 13px; }
.source .range { margin: 1px 14px 5px 15px; }
.source .transport { padding-left: 24px; margin-bottom: 8px; }
.source .add { margin-right: 12px; }
.video { flex: 1; min-height: 0; margin: 41px 13px 29px; padding: 129px 0 0 149px; background: linear-gradient(#e54949, #de4747 12%, #cd4044 22%, #b2373b 38%, #982c32 54%, #7a252c 73%, #651e25 86%, #55181f); color: #fff; font: 40px/42px "DejaVu Sans", sans-serif; overflow: hidden; white-space: nowrap; }
.video p { height: 42px; }
.video .cjk { font-family: "Noto Sans CJK JP", sans-serif; font-size: 44px; line-height: 36px; }
.video .zh { font-family: "Noto Sans CJK SC", sans-serif; font-size: 48px; font-weight: 500; }
.video .ko { font-family: "Noto Sans CJK KR", sans-serif; font-size: 48px; font-weight: 300; color: #f2e4e4; }
.video .ru { font-size: 44px; color: #f2e4e4; }
.program .readout { padding: 0 30px 0 20px; }
.shield { margin-left: 26px; color: #909090; }
.settings { margin: 0 8px 0 12px; color: #b5b5b5; }
.program .flags { margin: 3px 13px 7px; }
.second { margin-left: 42px; }
.program .ruler { margin: 0 13px; }
.program .range { margin: 1px 13px 6px 15px; }
.program .transport { padding-left: 34px; }
.program .transport:last-child { margin-bottom: 9px; }
.program .add { margin-right: 24px; margin-top: 6px; }
.rec { width: 10px; height: 10px; border-radius: 50%; background: #692e30; }

/* tools */
.tools { display: grid; grid-template-columns: 28px 28px; grid-auto-rows: 27px; column-gap: 1px; align-content: start; padding: 15px 0 0 10px; color: #b5b5b5; }
.tools button { position: relative; }
.tools .active { background: #161616; border: 1px solid #333; border-radius: 2px; color: #2d8ceb; }
.tools .sub::after { content: ""; position: absolute; right: 2px; bottom: 1px; border: 2px solid; border-color: transparent #999 #999 transparent; }

/* timeline */
.timeline { border: 1px solid #3a82cc; }
.tl-top { display: grid; grid-template-columns: 236px minmax(0, 1fr); height: 72px; flex: none; padding-right: 23px; }
.tl-tab { height: 26px; display: flex; align-items: center; color: #b8b8b8; padding: 0 0 2px 9px; white-space: nowrap; }
.close { width: 8px; margin-right: 9px; color: #8d8d8d; }
.tl-tab .i { margin-left: 2px; }
.tl-tc { font-size: 17px; line-height: 24px; height: 26px; padding: 1px 0 0 17px; }
.tl-tools { display: flex; padding-left: 11px; color: #b5b5b5; height: 19px; }
.tl-tools button { width: 34px; }
.tl-tools .on { color: #2d8ceb; }
.cc { width: 16px; height: 11px; background: #555; color: #1d1d1d; font: bold 9px/11px "Open Sans", sans-serif; border-radius: 2px; text-align: center; }
.tl-ruler { padding-top: 29px; display: flex; flex-direction: column; min-width: 0; }
.tl-ruler .flags { margin: 0; }
.tl-ruler .second { margin-left: 54px; }
.labels { position: relative; height: 16px; overflow: hidden; color: #8d8d8d; }
.labels span { position: absolute; top: 0; width: 76px; margin-left: -38px; text-align: center; }
.workarea { height: 2px; width: 89.5%; background: #eee819; }
.tl-body { flex: 1; min-height: 0; display: grid; grid-template-columns: minmax(0, 1fr) 11px; padding-right: 12px; background: #232323; }
.tracks { position: relative; display: flex; flex-direction: column; background: #1d1d1d; min-width: 0; }
.video-space { height: 134px; flex: none; }
.audio-space { flex: 1; }
.trk { height: 25px; flex: none; border-top: 1px solid #323232; display: grid; grid-template-columns: 236px minmax(0, 1fr); }
.trk.last { height: 26px; border-bottom: 1px solid #323232; }
.th { background: #262626; display: flex; align-items: center; padding-left: 12px; color: #b5b5b5; }
.th .i { width: 14px; height: 14px; margin: 0 3px; }
.th .patch { width: 32px; height: 24px; background: #085787; color: #6f9fbd; }
.th .patch ~ .patch + .i { margin: 0 6px 0 7px; }
.th button { width: 27px; height: 22px; padding-bottom: 1px; }
.th .eye { margin-left: 7px; }
.th .mic { color: #505050; margin-left: 6px; }
.th.mix { padding-left: 44px; color: #8d8d8d; }
.mix > .i:first-child { color: #b5b5b5; }
.mix span { margin-left: 5px; }
.mix .blue-text { margin-left: 57px; }
.mix .i:last-child { margin: 0 7px 8px auto; color: #b5b5b5; }
.lane { position: relative; background: #202020; }
.clip { position: absolute; top: 0; bottom: 0; background: #834243; color: #111; }
.clip.a { left: 1px; width: 60px; }
.clip.b { left: 63px; right: 177px; border-left: 1px solid #a88; }
.clip.sel { border: 3px solid #e6e6e6; border-top-width: 4px; border-bottom-width: 4px; }
.clip .name { display: flex; width: max-content; align-items: center; gap: 7px; height: 16px; background: #739bd0; font-size: 9px; line-height: 14px; padding: 0 5px 1px 8px; }
.clip.sel .name { width: auto; height: 12px; padding: 0 0 1px 6px; white-space: nowrap; }
.clip em { display: inline-block; width: 12px; height: 11px; background: #686868; border: 1px solid #999; color: #111; font: italic 9px/9px "Open Sans", sans-serif; text-align: center; flex: none; }
.audio em { position: absolute; left: 9px; top: 3px; background: #e9bd12; border-color: #d6c06a; }
.audio { background: linear-gradient(transparent 12px, #8f91b5 12px 13px, #5d4a6b 13px 14px, #8f91b5 14px 15px, transparent 15px) #834243; }
.split { height: 4px; flex: none; background: #2f2f2f; }
.playline { position: absolute; left: 236px; top: 0; bottom: 0; width: 1px; background: #2d8ceb; }
.vscroll { display: flex; flex-direction: column; gap: 4px; }
.vbar { background: #333; display: flex; flex-direction: column; justify-content: space-between; align-items: center; }
.vbar.v { height: 159px; padding: 5px 0 1px; }
.vbar.a { flex: 1; padding: 2px 0 3px; }
.tl-scroll { margin: 1px 24px 11px 13px; }

/* meters */
.meters { flex-direction: row; padding: 13px 14px 0 22px; }
.solo { width: 22px; display: flex; flex-direction: column; gap: 172px; padding-top: 86px; }
.solo button { width: 18px; height: 18px; background: #1a1a1a; border: 1px solid #343434; border-radius: 2px; color: #b5b5b5; font-size: 10px; }
.meter-col { flex: 1; display: flex; flex-direction: column; }
.meter { flex: 1; border: 1px solid #000; background: #1d1d1d; display: flex; }
.level { flex: 1; margin-left: 1px; border-left: 1px solid #e6e05a; }
.peak { width: 10px; border-left: 1px solid #000; display: flex; flex-direction: column; }
.peak b { flex: 1; }
.peak b + b { border-top: 1px solid #000; }
.db-ticks { height: 5px; color: #8d8d8d; }
.db-ticks svg { width: 100%; height: 5px; }
.db { position: relative; height: 21px; font-size: 10px; }
.db span { position: absolute; top: -2px; width: 30px; margin-left: -15px; text-align: center; left: 6px; }

/* clipped side strip */
.strip { overflow: hidden; }
.strip-top { height: 32px; flex: none; margin: 3px 0 0 8px; border-left: 1px solid #303030; padding: 8px 0 0 22px; color: #b5b5b5; }
.strip-tab { width: 5px; height: 20px; flex: none; margin: 17px 0 15px 16px; overflow: hidden; color: #b0b0b0; border-bottom: 2px solid #c0c0c0; line-height: 14px; }
.strip-box { width: 18px; height: 30px; flex: none; margin-left: 13px; background: #181818; border: 1px solid #333; border-right: 0; }
.strip ul { margin: 137px 0 0 21px; width: 10px; }
.strip li { height: 16px; overflow: hidden; margin-bottom: 11px; line-height: 14px; }
.strip .thumb { height: 79px; background: #000; margin-bottom: 5px; }
.strip .colour { background: linear-gradient(#999, #6a6a6a 14px, #5c5c5c 46px, #0ff 46px 52px, #ff0 52px 59px, #252525 59px); }
.strip .short { height: 73px; }
.knob { margin: auto 0 13px 21px; }

.status { height: 20px; flex: none; margin-top: 3px; background: linear-gradient(#fff, #fff) 48px bottom / 344px 2px no-repeat, linear-gradient(#555, #555) 640px bottom / 48px 1px no-repeat, #232323; display: flex; justify-content: space-between; }
.edge { width: 26px; border-left: 1px solid #333; }
```
FILE: script.js
```js
const NS = "http://www.w3.org/2000/svg";

function tickPath(width, scale, start, step, per, base, major, minor) {
  const k = width / scale;
  let d = "";
  for (let n = 0; ; n++) {
    const x = Math.round((start + n * step / per) * k);
    if (x >= width) break;
    if (x < 4) continue;
    const h = n % per === 0 ? major : minor;
    d += `M${x + 0.5} ${base}v${-h}`;
  }
  return d;
}

function drawTicks(el, d) {
  el.querySelectorAll(".ticks").forEach(n => n.remove());
  const svg = document.createElementNS(NS, "svg");
  svg.setAttribute("class", "ticks");
  const path = document.createElementNS(NS, "path");
  path.setAttribute("d", d);
  path.setAttribute("stroke", "currentColor");
  svg.append(path);
  el.append(svg);
}

const pad = n => String(n).padStart(2, "0");

function draw() {
  document.querySelectorAll(".ruler").forEach(el => {
    const { scale, start, step } = el.dataset;
    drawTicks(el, tickPath(el.clientWidth, +scale, +start, +step, 15, 13, 12, 6));
  });

  const labels = document.getElementById("labels");
  labels.replaceChildren();
  for (let n = 0; n <= 22; n++) {
    const t = 3584 + n * 256;
    const span = document.createElement("span");
    span.textContent = `${pad(Math.floor(t / 3600))}:${pad(Math.floor(t / 60) % 60)}:${pad(t % 60)}:00`;
    span.style.left = `${Math.round((-4 + n * 75.7) * labels.clientWidth / 1672)}px`;
    labels.append(span);
  }

  const ticks = document.getElementById("dbticks");
  const w = ticks.clientWidth;
  const step = (w - 15) / 10;
  let d = "";
  for (let n = 0; n <= 60; n++) d += `M${Math.round(3 + n * step / 6) + 0.5} 0v${n % 6 ? 2 : 5}`;
  drawTicks(ticks, d);
  const db = document.getElementById("db");
  db.querySelectorAll(".num").forEach(n => n.remove());
  for (let n = 1; n <= 10; n++) {
    const span = document.createElement("span");
    span.className = "num";
    span.textContent = n * 6 - 60;
    span.style.left = `${Math.round(3 + n * step)}px`;
    db.append(span);
  }
}

draw();
addEventListener("resize", draw);
```
